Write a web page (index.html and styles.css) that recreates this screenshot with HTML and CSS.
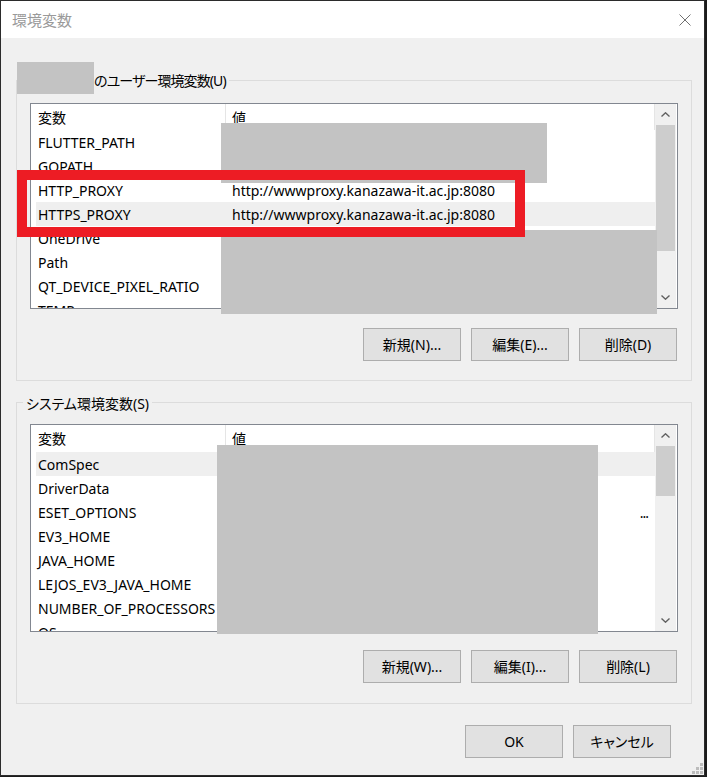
FILE: index.html
```html
<!DOCTYPE html>
<html lang="ja">
<head>
<meta charset="utf-8">
<title>環境変数</title>
<link rel="stylesheet" href="styles.css">
</head>
<body>
<div class="dialog">
  <div class="titlebar">
    <span class="title">環境変数</span>
    <svg class="close" width="12" height="12" viewBox="0 0 12 12"><path d="M0.5 0.5 L11.5 11.5 M11.5 0.5 L0.5 11.5" stroke="#707070" stroke-width="1" fill="none"/></svg>
  </div>
  <div class="content">
    <section class="group group-user">
      <div class="legend legend-user"><span class="redact-name"></span><span class="legend-text">のユーザー環境変数(U)</span></div>
      <div class="listbox listbox-user">
        <div class="list-main">
          <div class="list-header"><span class="hcell hcell-name">変数</span><span class="hcell hcell-value">値</span></div>
          <div class="row"><span class="cell-name">FLUTTER_PATH</span><span class="cell-value"></span></div>
          <div class="row"><span class="cell-name">GOPATH</span><span class="cell-value"></span></div>
          <div class="row"><span class="cell-name">HTTP_PROXY</span><span class="cell-value">http://wwwproxy.kanazawa-it.ac.jp:8080</span></div>
          <div class="row sel"><span class="cell-name">HTTPS_PROXY</span><span class="cell-value">http://wwwproxy.kanazawa-it.ac.jp:8080</span></div>
          <div class="row"><span class="cell-name">OneDrive</span><span class="cell-value"></span></div>
          <div class="row"><span class="cell-name">Path</span><span class="cell-value"></span></div>
          <div class="row"><span class="cell-name">QT_DEVICE_PIXEL_RATIO</span><span class="cell-value"></span></div>
          <div class="row"><span class="cell-name">TEMP</span><span class="cell-value"></span></div>
        </div>
        <div class="scrollbar">
          <div class="sb-btn"><svg width="9" height="5" viewBox="0 0 9 5"><path d="M0.5 4.5 L4.5 0.8 L8.5 4.5" stroke="#606060" stroke-width="1.4" fill="none"/></svg></div>
          <div class="sb-thumb thumb-user"></div>
          <div class="sb-track"></div>
          <div class="sb-btn"><svg width="9" height="5" viewBox="0 0 9 5"><path d="M0.5 0.5 L4.5 4.2 L8.5 0.5" stroke="#606060" stroke-width="1.4" fill="none"/></svg></div>
        </div>
      </div>
      <div class="btns">
        <button class="btn">新規(N)...</button>
        <button class="btn">編集(E)...</button>
        <button class="btn">削除(D)</button>
      </div>
    </section>

    <section class="group group-sys">
      <div class="legend legend-sys"><span class="legend-text">システム環境変数(S)</span></div>
      <div class="listbox listbox-sys">
        <div class="list-main">
          <div class="list-header"><span class="hcell hcell-name">変数</span><span class="hcell hcell-value">値</span></div>
          <div class="row sel"><span class="cell-name">ComSpec</span><span class="cell-value"></span></div>
          <div class="row"><span class="cell-name">DriverData</span><span class="cell-value"></span></div>
          <div class="row"><span class="cell-name">ESET_OPTIONS</span><span class="cell-value trunc">...</span></div>
          <div class="row"><span class="cell-name">EV3_HOME</span><span class="cell-value"></span></div>
          <div class="row"><span class="cell-name">JAVA_HOME</span><span class="cell-value"></span></div>
          <div class="row"><span class="cell-name">LEJOS_EV3_JAVA_HOME</span><span class="cell-value"></span></div>
          <div class="row"><span class="cell-name">NUMBER_OF_PROCESSORS</span><span class="cell-value"></span></div>
          <div class="row"><span class="cell-name">OS</span><span class="cell-value"></span></div>
        </div>
        <div class="scrollbar">
          <div class="sb-btn"><svg width="9" height="5" viewBox="0 0 9 5"><path d="M0.5 4.5 L4.5 0.8 L8.5 4.5" stroke="#606060" stroke-width="1.4" fill="none"/></svg></div>
          <div class="sb-thumb thumb-sys"></div>
          <div class="sb-track"></div>
          <div class="sb-btn"><svg width="9" height="5" viewBox="0 0 9 5"><path d="M0.5 0.5 L4.5 4.2 L8.5 0.5" stroke="#606060" stroke-width="1.4" fill="none"/></svg></div>
        </div>
      </div>
      <div class="btns">
        <button class="btn">新規(W)...</button>
        <button class="btn">編集(I)...</button>
        <button class="btn">削除(L)</button>
      </div>
    </section>

    <div class="footer">
      <button class="btn">OK</button>
      <button class="btn">キャンセル</button>
    </div>
  </div>

  <div class="redact redact-a"></div>
  <div class="redact redact-b"></div>
  <div class="redact redact-c"></div>
  <div class="mark-box"></div>

  <svg class="grip" width="11" height="11" viewBox="0 0 11 11">
    <rect x="8" y="0" width="3" height="3" fill="#bcbcbc"/>
    <rect x="4" y="4" width="3" height="3" fill="#bcbcbc"/>
    <rect x="8" y="4" width="3" height="3" fill="#bcbcbc"/>
    <rect x="0" y="8" width="3" height="3" fill="#bcbcbc"/>
    <rect x="4" y="8" width="3" height="3" fill="#bcbcbc"/>
    <rect x="8" y="8" width="3" height="3" fill="#bcbcbc"/>
  </svg>
</div>
</body>
</html>
```

FILE: styles.css
```css
* { box-sizing: border-box; }
html, body { margin: 0; padding: 0; }
body {
  background: #1b1b1b;
  width: 707px;
  height: 777px;
  overflow: hidden;
  font-family: "Noto Sans", "Noto Sans CJK JP", sans-serif;
  font-size: 14px;
  color: #000;
  font-feature-settings: "palt" 1;
}
.dialog {
  position: relative;
  width: 705px;
  height: 776px;
  border: 1px solid #2b2b2b;
  display: flex;
  flex-direction: column;
  background: #f0f0f0;
}
.titlebar {
  height: 37px;
  flex: none;
  background: #fff;
  display: flex;
  align-items: center;
  justify-content: space-between;
  padding: 0 13px 0 11px;
}
.title { font-size: 15px; color: #9a9a9a; line-height: 20px; }
.close { display: block; }
.content {
  flex: 1;
  display: flex;
  flex-direction: column;
  padding: 42px 12px 0 15px;
}
.group {
  border: 1px solid #dcdcdc;
  display: flex;
  flex-direction: column;
  padding: 0 13px 19px;
}
.group-sys { margin-top: 21px; padding-bottom: 20px; }
.legend { align-self: flex-start; display: flex; }
.legend-user { margin: -19px 0 0 -13px; height: 32px; }
.legend-sys { margin: -9px 0 0 -7px; }
.redact-name { width: 77px; height: 32px; background: #c3c3c3; }
.legend-text {
  background: #f0f0f0;
  line-height: 20px;
  height: 20px;
  white-space: nowrap;
}
.legend-user .legend-text { margin-top: 9px; padding-right: 3px; letter-spacing: -0.9px; }
.legend-sys .legend-text { padding: 0 3px; }

.listbox {
  border: 1px solid #828790;
  display: flex;
  background: #fff;
  overflow: hidden;
}
.listbox-user { margin-top: 9px; height: 206px; }
.listbox-sys { margin-top: 10px; height: 208px; }
.list-main { flex: 1; overflow: hidden; }
.list-header { display: flex; height: 26px; }
.listbox-sys .list-header { height: 27px; }
.hcell { line-height: 26px; padding-top: 1px; border-right: 1px solid #e5e5e5; white-space: nowrap; }
.hcell-name { width: 195px; padding-left: 7px; }
.hcell-value { width: 429px; padding-left: 6px; }
.row {
  display: flex;
  align-items: flex-start;
  height: 24px;
  line-height: 24px;
  margin-left: 5px;
  white-space: nowrap;
}
.row.sel { background: #efefef; }
.cell-name { width: 190px; flex: none; padding: 1px 0 0 2px; overflow: hidden; }
.cell-value { flex: 1; padding: 1px 0 0 6px; overflow: hidden; }
.cell-value.trunc { text-align: right; padding-right: 7px; letter-spacing: -1px; }

.scrollbar {
  width: 21px;
  flex: none;
  margin-right: 1px;
  background: #f0f0f0;
  display: flex;
  flex-direction: column;
}
.sb-btn { height: 21px; flex: none; display: flex; align-items: center; justify-content: center; }
.sb-btn svg { display: block; }
.sb-thumb { margin: 0 1px; background: #cdcdcd; flex: none; }
.thumb-user { height: 126px; }
.thumb-sys { height: 50px; }
.sb-track { flex: 1; }

.btns {
  display: flex;
  justify-content: flex-end;
  gap: 10px;
  margin-top: 19px;
  margin-right: 1px;
}
.group-sys .btns { margin-top: 18px; }
.btn {
  width: 98px;
  height: 33px;
  background: #e1e1e1;
  border: 1px solid #adadad;
  font: inherit;
  color: #000;
  line-height: 20px;
  padding: 0;
  display: flex;
  align-items: center;
  justify-content: center;
  white-space: nowrap;
}
.footer {
  display: flex;
  justify-content: flex-end;
  gap: 10px;
  margin-top: 21px;
  margin-right: 21px;
}

.redact { position: absolute; background: #c3c3c3; }
.redact-a { left: 220px; top: 122px; width: 326px; height: 60px; }
.redact-b { left: 220px; top: 229px; width: 436px; height: 84px; }
.redact-c { left: 216px; top: 444px; width: 381px; height: 189px; }
.mark-box {
  position: absolute;
  left: 16px;
  top: 169px;
  width: 508px;
  height: 67px;
  border: 10px solid #ed1c24;
}
.grip { position: absolute; right: 1px; bottom: 1px; display: block; }
```
